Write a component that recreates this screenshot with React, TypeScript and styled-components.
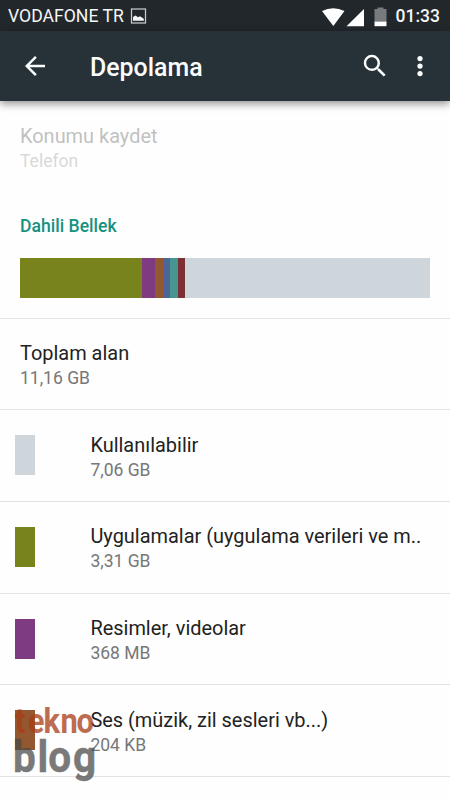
import React from "react";
import styled, { createGlobalStyle } from "styled-components";

const GlobalStyle = createGlobalStyle`
  * { box-sizing: border-box; }
  body { margin: 0; background: #fefefe; font-family: Roboto, "Noto Sans", sans-serif; }
`;

const Screen = styled.div`
  position: relative;
  width: 450px;
  height: 800px;
  overflow: hidden;
  display: flex;
  flex-direction: column;
  background: #fefefe;
`;

const StatusBar = styled.div`
  flex: none;
  height: 31px;
  padding: 2px 10px 0 8px;
  display: flex;
  align-items: center;
  background: #22272b;
  color: #f4f6f7;
  font-size: 17.6px;
  line-height: 29px;
`;

const Carrier = styled.span`
  width: 122px;
  white-space: nowrap;
`;

const StatusIcons = styled.svg`
  margin-left: auto;
  display: block;
`;

const Clock = styled.span`
  width: 44.5px;
  margin-left: 8.5px;
  font-weight: 500;
  font-size: 17.5px;
  white-space: nowrap;
`;

const AppBar = styled.header`
  flex: none;
  height: 70px;
  display: flex;
  align-items: center;
  padding: 0 15px 0 20px;
  background: #273238;
  color: #fbfdfd;
  box-shadow: 0 3px 8px rgba(0, 0, 0, 0.42);
  z-index: 1;
`;

const IconButton = styled.button`
  width: 30px;
  height: 30px;
  padding: 0;
  border: 0;
  background: none;
  color: inherit;
  & + & { margin-left: 15px; }
  svg { display: block; }
`;

const Title = styled.h1`
  flex: 1;
  margin: 3px 0 0 40px;
  font-size: 24.9px;
  line-height: 30px;
  font-weight: 500;
`;

const Setting = styled.div<{ $disabled?: boolean }>`
  height: ${(p) => (p.$disabled ? "97px" : "91.7px")};
  padding: ${(p) => (p.$disabled ? "23px" : "22.6px")} 20px 0;
  opacity: ${(p) => (p.$disabled ? 0.28 : 1)};
  border-bottom: ${(p) => (p.$disabled ? "0" : "1px solid #e2e2e2")};
`;

const Name = styled.div`
  color: #222;
  font-size: 19.95px;
  line-height: 24px;
  white-space: nowrap;
`;

const Value = styled.div`
  margin-top: 1px;
  color: #777;
  font-size: 17.5px;
  line-height: 24px;
`;

const Section = styled.section`
  height: 120.5px;
  padding: 18px 20px 0;
  border-bottom: 1px solid #e2e2e2;
`;

const SectionTitle = styled.h2`
  margin: 0 0 20.5px;
  color: #16917f;
  font-size: 17.6px;
  line-height: 21px;
  font-weight: 500;
`;

const UsageBar = styled.div`
  display: flex;
  height: 40px;
  background: #ced6db;
`;

const Segment = styled.div<{ $width: number; $color: string }>`
  width: ${(p) => p.$width}px;
  background: ${(p) => p.$color};
`;

const Row = styled.div`
  height: 91.7px;
  display: flex;
  padding-left: 15.4px;
  border-bottom: 1px solid #e2e2e2;
`;

const Swatch = styled.div<{ $color: string }>`
  flex: none;
  width: 20px;
  height: 40px;
  margin: 25.2px 55px 0 0;
  background: ${(p) => p.$color};
`;

const RowText = styled.div`
  padding-top: 22.6px;
`;

const Watermark = styled.svg`
  position: absolute;
  left: 10px;
  top: 698px;
  overflow: visible;
`;

const segments = [
  { width: 121.7, color: "#78831b" },
  { width: 13, color: "#7f3b82" },
  { width: 8, color: "#93582f" },
  { width: 7.3, color: "#4b6697" },
  { width: 7.8, color: "#479591" },
  { width: 7.2, color: "#7b3033" },
];

const categories = [
  { name: "Kullanılabilir", value: "7,06 GB", color: "#ced6db" },
  { name: "Uygulamalar (uygulama verileri ve m..", value: "3,31 GB", color: "#78831b" },
  { name: "Resimler, videolar", value: "368 MB", color: "#7f3b82" },
  { name: "Ses (müzik, zil sesleri vb...)", value: "204 KB", color: "#93582f" },
];

export default function App() {
  return (
    <Screen>
      <GlobalStyle />
      <StatusBar>
        <Carrier>VODAFONE TR</Carrier>
        <svg width="17" height="17" viewBox="0 0 17 17">
          <rect x="1.5" y="1" width="14" height="14" fill="none" stroke="#cbd0d3" strokeWidth="1.2" />
          <path d="M3 12.8V9l2.6-1.6L8 9.3l2-1 3.8 2.5v2z" fill="#f4f6f7" />
        </svg>
        <StatusIcons width="68" height="22" viewBox="319 4.5 68 22">
          <path d="M322 9.5Q333.3 4 344.5 9.5L333.3 24.4Z" fill="#fff" />
          <path d="M364 7.5V24.7H346.5Z" fill="#fff" />
          <path d="M377.5 6h6v1.5h3V20h-12V7.5h3z" fill="#777b7d" />
          <path d="M374.5 20h12v4.7h-12z" fill="#fff" />
        </StatusIcons>
        <Clock>01:33</Clock>
      </StatusBar>
      <AppBar>
        <IconButton aria-label="Geri">
          <svg width="30" height="30" viewBox="0 0 24 24" fill="currentColor">
            <path d="M20 11H7.83l5.59-5.59L12 4l-8 8 8 8 1.41-1.41L7.83 13H20v-2z" />
          </svg>
        </IconButton>
        <Title>Depolama</Title>
        <IconButton aria-label="Ara">
          <svg width="30" height="30" viewBox="0 0 24 24" fill="currentColor">
            <path d="M15.5 14h-.79l-.28-.27A6.471 6.471 0 0 0 16 9.5 6.5 6.5 0 1 0 9.5 16c1.61 0 3.09-.59 4.23-1.57l.27.28v.79l5 4.99L20.49 19l-4.99-5zm-6 0C7.01 14 5 11.99 5 9.5S7.01 5 9.5 5 14 7.01 14 9.5 11.99 14 9.5 14z" />
          </svg>
        </IconButton>
        <IconButton aria-label="Menü">
          <svg width="30" height="30" viewBox="0 0 24 24" fill="currentColor">
            <circle cx="12" cy="6" r="2.1" />
            <circle cx="12" cy="12" r="2.1" />
            <circle cx="12" cy="18" r="2.1" />
          </svg>
        </IconButton>
      </AppBar>
      <main>
        <Setting $disabled>
          <Name>Konumu kaydet</Name>
          <Value>Telefon</Value>
        </Setting>
        <Section>
          <SectionTitle>Dahili Bellek</SectionTitle>
          <UsageBar>
            {segments.map((s) => (
              <Segment key={s.color} $width={s.width} $color={s.color} />
            ))}
          </UsageBar>
        </Section>
        <Setting>
          <Name>Toplam alan</Name>
          <Value>11,16 GB</Value>
        </Setting>
        {categories.map((c) => (
          <Row key={c.name}>
            <Swatch $color={c.color} />
            <RowText>
              <Name>{c.name}</Name>
              <Value>{c.value}</Value>
            </RowText>
          </Row>
        ))}
      </main>
      <Watermark width="92" height="92" viewBox="0 0 92 92" fontFamily="Roboto, sans-serif" fontWeight="700">
        <text transform="scale(0.87 1)" x="5.8 20.5 38.5 58 76.5" y="35" fontSize="35.5" fill="#a83c16" opacity="0.75">tekno</text>
        <text transform="scale(0.9 1)" x="3.4 30.5 42.5 70" y="74" fontSize="45" fill="#494949" stroke="#494949" strokeWidth="0.5" opacity="0.73">blog</text>
      </Watermark>
    </Screen>
  );
}
